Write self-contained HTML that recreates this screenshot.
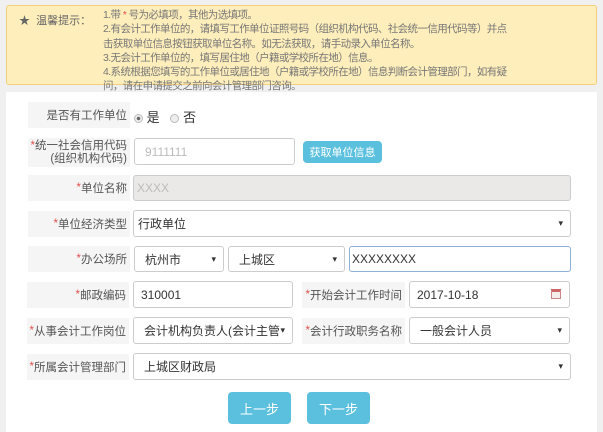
<!DOCTYPE html>
<html><head><meta charset="utf-8"><style>
*{box-sizing:border-box;margin:0;padding:0}
body{width:603px;height:421px;background:#f0f0f0;font-family:"Liberation Sans","Noto Sans CJK SC",sans-serif;font-size:12px;color:#333;position:relative;overflow:hidden}
.abs{position:absolute}
.notice{left:6px;top:5px;width:591px;height:80px;background:#fdeebb;border:1px solid #f2cf7a;border-radius:3px}
.notice .t{left:12px;top:6px;color:#666;font-size:11px}
.notice .c{left:96px;top:2px;color:#777;font-size:10.5px;line-height:14.3px;white-space:nowrap;letter-spacing:-0.6px}
.panel{left:6px;top:92px;width:591px;height:340px;background:#fff}
.lab{background:#f5f5f5;white-space:nowrap;color:#555;display:flex;align-items:center;justify-content:flex-end;padding-right:3px;font-size:11.5px}
.lab b{color:#e05050;font-weight:normal}
.in{border:1px solid #ccc;border-radius:3px;background:#fff;display:flex;align-items:center;padding-left:10px;color:#333;font-size:12px;white-space:nowrap;overflow:hidden}
.sel::after{content:"▾";position:absolute;right:7px;font-size:9px;color:#333}
.btn{background:#5bc0de;color:#fff;border-radius:4px;display:flex;align-items:center;justify-content:center;font-size:13px}
.rd{display:inline-block;width:9px;height:9px;border-radius:50%;border:1px solid #bbb;background:#eee;vertical-align:-1px}
</style></head><body>
<div class="abs notice">
<div class="abs t">★&nbsp; 温馨提示：</div>
<div class="abs c">1.带 <span style="color:#e05050">*</span> 号为必填项，其他为选填项。<br>2.有会计工作单位的，请填写工作单位证照号码（组织机构代码、社会统一信用代码等）并点<br>击获取单位信息按钮获取单位名称。如无法获取，请手动录入单位名称。<br>3.无会计工作单位的，填写居住地（户籍或学校所在地）信息。<br>4.系统根据您填写的工作单位或居住地（户籍或学校所在地）信息判断会计管理部门，如有疑<br>问，请在申请提交之前向会计管理部门咨询。</div>
</div>
<div class="abs panel"></div>

<div class="abs lab" style="left:28px;width:102px;top:102px;height:26px">是否有工作单位</div>
<div class="abs" style="left:134px;top:107px;font-size:13px;color:#333"><span class="rd" style="background:radial-gradient(#666 30%,#eee 40%)"></span> 是 &nbsp;&nbsp;<span class="rd"></span> 否</div>

<div class="abs lab" style="left:28px;width:102px;top:138px;height:29px;line-height:13px;text-align:right"><div><b>*</b>统一社会信用代码<br>(组织机构代码)</div></div>
<div class="abs in" style="left:134px;top:138px;width:161px;height:27px;color:#bbb">9111111</div>
<div class="abs btn" style="left:303px;top:141px;width:79px;height:22px;font-size:11px">获取单位信息</div>

<div class="abs lab" style="left:28px;width:102px;top:175px;height:26px"><b>*</b>单位名称</div>
<div class="abs in" style="left:133px;top:175px;width:438px;height:26px;background:#ebe8e8;color:#bbb;padding-left:3px">XXXX</div>

<div class="abs lab" style="left:28px;width:102px;top:211px;height:26px"><b>*</b>单位经济类型</div>
<div class="abs in sel" style="left:133px;top:210px;width:438px;height:27px;padding-left:4px">行政单位</div>

<div class="abs lab" style="left:28px;width:102px;top:246px;height:26px"><b>*</b>办公场所</div>
<div class="abs in sel" style="left:134px;top:246px;width:90px;height:26px">杭州市</div>
<div class="abs in sel" style="left:228px;top:246px;width:117px;height:26px">上城区</div>
<div class="abs in" style="left:349px;top:246px;width:222px;height:26px;border-color:#8fb0d8;padding-left:2px">XXXXXXXX</div>

<div class="abs lab" style="left:27px;width:102px;top:282px;height:26px"><b>*</b>邮政编码</div>
<div class="abs in" style="left:133px;top:281px;width:160px;height:27px;padding-left:7px">310001</div>
<div class="abs lab" style="left:302px;width:103px;top:282px;height:26px"><b>*</b>开始会计工作时间</div>
<div class="abs in" style="left:409px;top:281px;width:161px;height:27px;padding-left:7px">2017-10-18</div>
<div class="abs" style="left:551px;top:289px;width:10px;height:10px;border:1px solid #c88;border-top:3px solid #c66;background:#f4eee8"></div>

<div class="abs lab" style="left:27px;width:102px;top:318px;height:26px"><b>*</b>从事会计工作岗位</div>
<div class="abs in sel" style="left:133px;top:317px;width:160px;height:27px;padding-left:10px;padding-right:18px">会计机构负责人(会计主管</div>
<div class="abs lab" style="left:302px;width:103px;top:318px;height:26px"><b>*</b>会计行政职务名称</div>
<div class="abs in sel" style="left:409px;top:317px;width:161px;height:27px">一般会计人员</div>

<div class="abs lab" style="left:27px;width:102px;top:354px;height:26px"><b>*</b>所属会计管理部门</div>
<div class="abs in sel" style="left:133px;top:353px;width:438px;height:27px">上城区财政局</div>

<div class="abs btn" style="left:228px;top:392px;width:63px;height:32px">上一步</div>
<div class="abs btn" style="left:307px;top:392px;width:63px;height:32px">下一步</div>
</body></html>
